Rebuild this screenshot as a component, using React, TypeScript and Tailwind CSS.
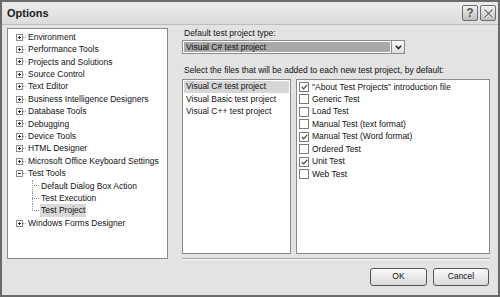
import React from 'react';

const treeItems: { label: string; level: number; state?: 'plus' | 'minus'; selected?: boolean; last?: boolean }[] = [
  { label: 'Environment', level: 0, state: 'plus' },
  { label: 'Performance Tools', level: 0, state: 'plus' },
  { label: 'Projects and Solutions', level: 0, state: 'plus' },
  { label: 'Source Control', level: 0, state: 'plus' },
  { label: 'Text Editor', level: 0, state: 'plus' },
  { label: 'Business Intelligence Designers', level: 0, state: 'plus' },
  { label: 'Database Tools', level: 0, state: 'plus' },
  { label: 'Debugging', level: 0, state: 'plus' },
  { label: 'Device Tools', level: 0, state: 'plus' },
  { label: 'HTML Designer', level: 0, state: 'plus' },
  { label: 'Microsoft Office Keyboard Settings', level: 0, state: 'plus' },
  { label: 'Test Tools', level: 0, state: 'minus' },
  { label: 'Default Dialog Box Action', level: 1 },
  { label: 'Test Execution', level: 1 },
  { label: 'Test Project', level: 1, selected: true, last: true },
  { label: 'Windows Forms Designer', level: 0, state: 'plus' },
];

const projects = ['Visual C# test project', 'Visual Basic test project', 'Visual C++ test project'];

const files: { label: string; checked: boolean }[] = [
  { label: '"About Test Projects" introduction file', checked: true },
  { label: 'Generic Test', checked: false },
  { label: 'Load Test', checked: false },
  { label: 'Manual Test (text format)', checked: false },
  { label: 'Manual Test (Word format)', checked: true },
  { label: 'Ordered Test', checked: false },
  { label: 'Unit Test', checked: true },
  { label: 'Web Test', checked: false },
];

function Expander({ open }: { open: boolean }) {
  return (
    <span className="relative flex h-[7px] w-[7px] items-center justify-center border border-[#8c8c8c] bg-white">
      <span className="absolute h-px w-[3px] bg-[#333]" />
      {!open && <span className="absolute h-[3px] w-px bg-[#333]" />}
    </span>
  );
}

function Check({ checked }: { checked: boolean }) {
  return (
    <span className="flex h-[10px] w-[10px] items-center justify-center border border-[#7a7a7a] bg-white">
      {checked && (
        <svg width="7" height="6" viewBox="0 0 7 6">
          <path d="M0.8 3 L2.6 4.8 L6.2 0.8" fill="none" stroke="#444" strokeWidth="1.2" />
        </svg>
      )}
    </span>
  );
}

function TitleButton({ children }: { children: React.ReactNode }) {
  return (
    <div className="flex h-[16px] w-[16px] items-center justify-center rounded-[2px] border border-[#6e6e6e] bg-gradient-to-b from-[#f2f2f2] to-[#bdbdbd] text-[12px] font-bold leading-none text-[#555]">
      {children}
    </div>
  );
}

export default function App() {
  return (
    <div
      className="relative flex h-[297px] w-[500px] flex-col overflow-hidden border-2 border-[#6a6a6a] bg-[#e3e3e3] text-[#111]"
      style={{ fontFamily: '"Liberation Sans", Arial, sans-serif' }}
    >
      {/* Title bar */}
      <div className="flex h-[22px] shrink-0 items-center justify-between bg-gradient-to-b from-[#ececec] to-[#dcdcdc] pl-[5px] pr-[2px]">
        <span className="text-[11px] font-bold text-[#1a1a1a]">Options</span>
        <div className="flex gap-[2px]">
          <TitleButton>?</TitleButton>
          <TitleButton>
            <svg width="11" height="11" viewBox="0 0 11 11">
              <path d="M1.5 1.5 L9.5 9.5 M9.5 1.5 L1.5 9.5" stroke="#fff" strokeWidth="3" />
              <path d="M1.5 1.5 L9.5 9.5 M9.5 1.5 L1.5 9.5" stroke="#666" strokeWidth="1.3" />
            </svg>
          </TitleButton>
        </div>
      </div>

      {/* Body */}
      <div className="flex flex-1 border-t border-[#bdbdbd] pl-[5px] pr-[8px] pt-[3px]">
        {/* Tree */}
        <div className="h-[231px] w-[161px] shrink-0 border border-[#8a8a8a] bg-white pt-[2px] text-[8.5px]">
          {treeItems.map((item) => (
            <div key={item.label} className="flex h-[12.4px] items-center">
              {item.level === 0 ? (
                <div className="flex items-center pl-[8px]">
                  <Expander open={item.state === 'minus'} />
                  <span className="w-[3px] border-t border-dotted border-[#999]" />
                  <span className="ml-[2px] whitespace-nowrap">{item.label}</span>
                </div>
              ) : (
                <div className="flex h-full items-center pl-[24px]">
                  <span className="relative flex h-full w-[8px] items-center">
                    <span className={`absolute left-0 top-0 border-l border-dotted border-[#999] ${item.last ? 'h-1/2' : 'h-full'}`} />
                    <span className="w-[7px] border-t border-dotted border-[#999]" />
                  </span>
                  <span className={`whitespace-nowrap px-[1px] ${item.selected ? 'bg-[#d9d9d9]' : ''}`}>{item.label}</span>
                </div>
              )}
            </div>
          ))}
        </div>

        {/* Right side */}
        <div className="ml-[14px] flex flex-1 flex-col text-[8.5px]">
          <div className="h-[10px] pl-[2px] leading-[10px]">Default test project type:</div>
          <div className="mt-[2px] flex h-[14px] w-[223px] border border-[#8a8a8a] bg-white">
            <div className="m-px flex flex-1 items-center bg-[#a9a9a9] pl-[2px]">Visual C# test project</div>
            <div className="flex w-[13px] items-center justify-center border-l border-[#8a8a8a] bg-gradient-to-b from-[#fafafa] to-[#dedede]">
              <svg width="7" height="5" viewBox="0 0 7 5">
                <path d="M0.8 0.8 L3.5 3.6 L6.2 0.8" fill="none" stroke="#222" strokeWidth="1.5" />
              </svg>
            </div>
          </div>
          <div className="mt-[10px] pl-[2px]">Select the files that will be added to each new test project, by default:</div>
          <div className="mt-[2px] flex h-[175px] gap-[5px]">
            <div className="w-[109px] border border-[#8a8a8a] bg-white p-px">
              {projects.map((p, i) => (
                <div key={p} className={`flex h-[12.2px] items-center pl-[2px] ${i === 0 ? 'bg-[#d6d6d6]' : ''}`}>
                  {p}
                </div>
              ))}
            </div>
            <div className="flex-1 border border-[#8a8a8a] bg-white pt-px">
              {files.map((f) => (
                <div key={f.label} className="flex h-[12.45px] items-center gap-[3px] pl-[2px]">
                  <Check checked={f.checked} />
                  <span className="whitespace-nowrap">{f.label}</span>
                </div>
              ))}
            </div>
          </div>
          <div className="mt-[4px] border-t border-[#a8a8a8] shadow-[0_1px_0_#fafafa]" />
          <div className="mt-[9px] flex justify-end gap-[6px] pr-[1px]">
            <button className="h-[18px] w-[57px] rounded-[3px] border border-[#555] bg-gradient-to-b from-[#fbfbfb] to-[#d9d9d9] text-[8.5px]">
              OK
            </button>
            <button className="h-[18px] w-[56px] rounded-[3px] border border-[#555] bg-gradient-to-b from-[#fbfbfb] to-[#d9d9d9] text-[8.5px]">
              Cancel
            </button>
          </div>
        </div>
      </div>
    </div>
  );
}
